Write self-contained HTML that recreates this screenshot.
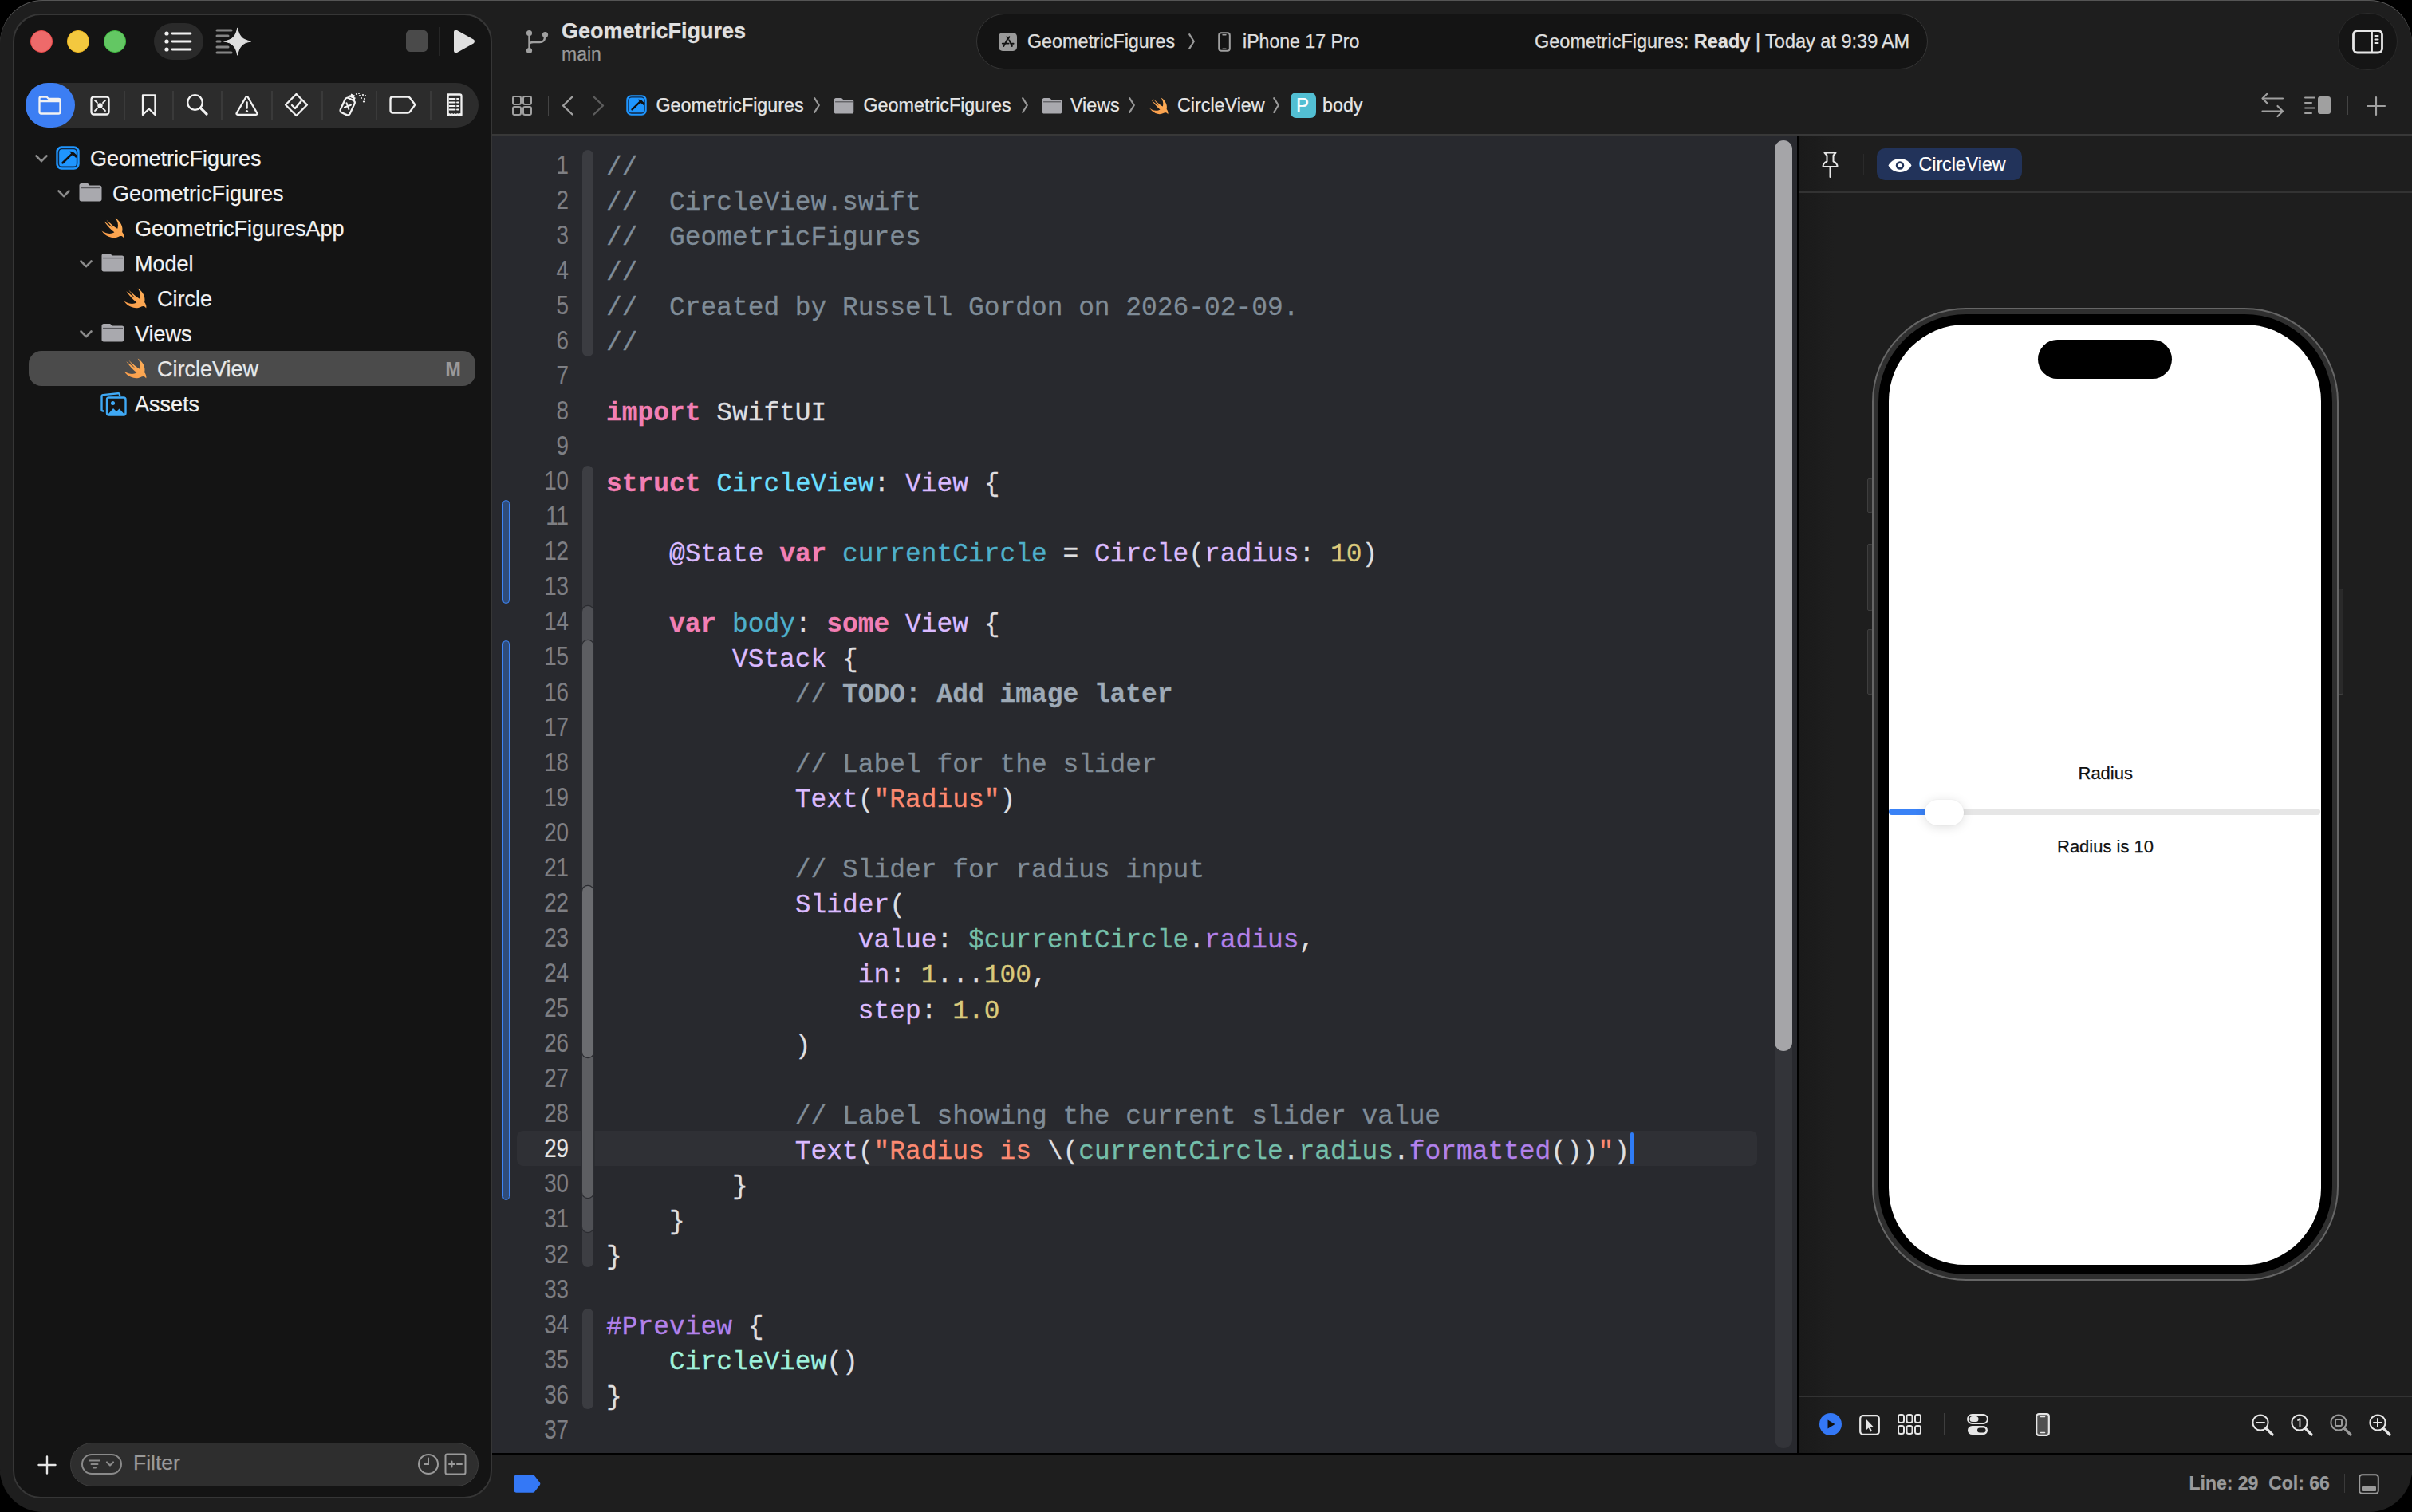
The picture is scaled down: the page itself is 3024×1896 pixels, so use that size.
<!DOCTYPE html>
<html><head><meta charset="utf-8">
<style>
*{margin:0;padding:0;box-sizing:border-box}
html,body{width:3024px;height:1896px;overflow:hidden;background:#000}
body{font-family:"Liberation Sans",sans-serif;color:#e6e6e6;position:relative}
.a{position:absolute}
svg{position:absolute;overflow:visible}
#win{left:0;top:0;width:3024px;height:1896px;border-radius:54px;background:#1e1e1e;overflow:hidden;box-shadow:inset 0 1px 0 #555}
.t{position:absolute;white-space:pre;line-height:1;-webkit-text-stroke:0.25px currentColor}
.code{font-family:"Liberation Mono",monospace;font-size:32.9px;white-space:pre;position:absolute;line-height:44.07px;left:760px;color:#dfdfe0;-webkit-text-stroke:0.3px currentColor}
.ln{position:absolute;white-space:pre;font-family:"Liberation Sans",sans-serif;font-size:33px;color:#7e7f84;text-align:right;width:100px;left:612.5px;line-height:44.07px;transform:scaleX(0.84);transform-origin:100% 0;-webkit-text-stroke:0.2px currentColor}
.code .c{color:#7f8c98}
.code .k{color:#f27fb4;font-weight:bold}
.code .td{color:#6bdfff}
.code .od{color:#4eb0cc}
.code .ty{color:#dabaff}
.code .n{color:#d9c97c}
.code .s{color:#fb8a72}
.code .pv{color:#74bfab}
.code .op{color:#b281eb}
.code .mk{color:#9eaab6;font-weight:bold}
.code .pp{color:#b281eb}
.code .pc{color:#9ef1dd}
</style></head><body>
<div id="win" class="a">
<div class="a" style="left:616.0px;top:170.0px;width:1637.0px;height:1652.0px;background:#28292e;border-radius:0px;"></div>
<div class="a" style="left:2255.0px;top:170.0px;width:769.0px;height:1652.0px;background:linear-gradient(90deg,#1a1a1a 0px,#1e1e1e 45px);border-radius:0px;"></div>
<div class="a" style="left:616.0px;top:168.0px;width:2408.0px;height:2.0px;background:#383838;border-radius:0px;"></div>
<div class="a" style="left:2253.0px;top:170.0px;width:2.0px;height:1654.0px;background:#000;border-radius:0px;"></div>
<div class="a" style="left:616.0px;top:1822.0px;width:2408.0px;height:2.0px;background:#000;border-radius:0px;"></div>
<div class="a" style="left:648.0px;top:1418.0px;width:1555.0px;height:44.0px;background:#2f3035;border-radius:8px;"></div>
<div class="a" style="left:2225.0px;top:176.0px;width:22.0px;height:1640.0px;background:#333439;border-radius:11px;"></div>
<div class="a" style="left:2225.0px;top:176.0px;width:22.0px;height:1142.0px;background:#a5a5a8;border-radius:11px;"></div>
<div class="a" style="left:630.0px;top:627.0px;width:9.0px;height:130.0px;background:#2f4c7a;border-radius:5px;border:1.6px solid #3d85f7"></div>
<div class="a" style="left:630.0px;top:803.0px;width:9.0px;height:702.0px;background:#2f4c7a;border-radius:5px;border:1.6px solid #3d85f7"></div>
<div class="a" style="left:730.0px;top:188.0px;width:14.0px;height:259.0px;background:#3b3c41;border-radius:7px;"></div>
<div class="a" style="left:730.0px;top:584.0px;width:14.0px;height:1005.0px;background:#3d3e43;border-radius:7px;"></div>
<div class="a" style="left:730.0px;top:760.0px;width:14.0px;height:785.0px;background:#4f5055;border-radius:7px;box-shadow:0 0 0 1.3px #2b2c31"></div>
<div class="a" style="left:730.0px;top:803.0px;width:14.0px;height:699.0px;background:#5d5e62;border-radius:7px;box-shadow:0 0 0 1.3px #2b2c31"></div>
<div class="a" style="left:730.0px;top:1111.0px;width:14.0px;height:215.0px;background:#6b6c70;border-radius:7px;box-shadow:0 0 0 1.3px #2b2c31"></div>
<div class="a" style="left:730.0px;top:1641.0px;width:14.0px;height:126.0px;background:#3b3c41;border-radius:7px;"></div>
<div class="ln" style="top:184.6px">1
2
3
4
5
6
7
8
9
10
11
12
13
14
15
16
17
18
19
20
21
22
23
24
25
26
27
28
<span style="color:#e6e6e6">29</span>
30
31
32
33
34
35
36
37</div>
<div class="code" style="top:189px"><span class="c">//</span>
<span class="c">//  CircleView.swift</span>
<span class="c">//  GeometricFigures</span>
<span class="c">//</span>
<span class="c">//  Created by Russell Gordon on 2026-02-09.</span>
<span class="c">//</span>

<span class="k">import</span> SwiftUI

<span class="k">struct</span> <span class="td">CircleView</span>: <span class="ty">View</span> {

    <span class="ty">@State</span> <span class="k">var</span> <span class="od">currentCircle</span> = <span class="ty">Circle</span>(<span class="ty">radius</span>: <span class="n">10</span>)

    <span class="k">var</span> <span class="od">body</span>: <span class="k">some</span> <span class="ty">View</span> {
        <span class="ty">VStack</span> {
            <span class="c">// </span><span class="mk">TODO: Add image later</span>

            <span class="c">// Label for the slider</span>
            <span class="ty">Text</span>(<span class="s">&quot;Radius&quot;</span>)

            <span class="c">// Slider for radius input</span>
            <span class="ty">Slider</span>(
                <span class="ty">value</span>: <span class="pv">$currentCircle</span>.<span class="op">radius</span>,
                <span class="ty">in</span>: <span class="n">1</span>...<span class="n">100</span>,
                <span class="ty">step</span>: <span class="n">1.0</span>
            )

            <span class="c">// Label showing the current slider value</span>
            <span class="ty">Text</span>(<span class="s">&quot;Radius is </span>\(<span class="pv">currentCircle</span>.<span class="pv">radius</span>.<span class="op">formatted</span>())<span class="s">&quot;</span>)
        }
    }
}

<span class="pp">#Preview</span> {
    <span class="pc">CircleView</span>()
}
</div>
<div class="a" style="left:2044.0px;top:1420.0px;width:4.0px;height:40.0px;background:#2f7cf6;border-radius:2px;"></div>
<div class="a" style="left:16.0px;top:17.0px;width:600.5px;height:1862.0px;background:#141414;border-radius:35px;border:2px solid #363636"></div>
<svg style="left:37.0px;top:37.0px" width="30" height="30" viewBox="0 0 30 30"><circle cx="15" cy="15" r="13.6" fill="#ee6a6a" stroke="#f04a4a" stroke-width="0.9"/></svg>
<svg style="left:83.0px;top:37.0px" width="30" height="30" viewBox="0 0 30 30"><circle cx="15" cy="15" r="13.6" fill="#f3c83f" stroke="#f5bb1f" stroke-width="0.9"/></svg>
<svg style="left:129.0px;top:37.0px" width="30" height="30" viewBox="0 0 30 30"><circle cx="15" cy="15" r="13.6" fill="#63c763" stroke="#3fbd3f" stroke-width="0.9"/></svg>
<div class="a" style="left:193.0px;top:29.0px;width:62.0px;height:46.0px;background:#2a2a2a;border-radius:23px;"></div>
<svg style="left:206.0px;top:39.0px" width="36" height="26" viewBox="0 0 36 26"><g fill="#f0f0f0"><circle cx="3" cy="3" r="2.6"/><circle cx="3" cy="13" r="2.6"/><circle cx="3" cy="23" r="2.6"/></g><g stroke="#f0f0f0" stroke-width="2.8" stroke-linecap="round"><path d="M10 3 H33"/><path d="M10 13 H33"/><path d="M10 23 H33"/></g></svg>
<svg style="left:270.0px;top:35.0px" width="46" height="35" viewBox="0 0 46 35"><g stroke="#858585" stroke-width="3" stroke-linecap="round"><path d="M2 3 H20"/><path d="M2 10 H16"/><path d="M2 17 H6"/><path d="M2 24 H16"/><path d="M2 31 H20"/></g><path fill="#dedede" stroke="#dedede" stroke-width="1.2" stroke-linejoin="round" d="M27.7 0.3 C29.3 9.8 33.5 15.6 44.6 17 C33.5 18.4 29.3 24.2 27.7 33.8 C26.1 24.2 21.9 18.4 10.8 17 C21.9 15.6 26.1 9.8 27.7 0.3Z"/></svg>
<div class="a" style="left:509.0px;top:38.0px;width:27.0px;height:27.0px;background:#4a4a4a;border-radius:5px;"></div>
<div class="a" style="left:550.5px;top:34.0px;width:1.5px;height:36.0px;background:#262626;border-radius:0px;"></div>
<svg style="left:567.0px;top:36.0px" width="30" height="31" viewBox="0 0 30 31"><path fill="#e0e0e0" d="M2 4.2C2 2 4.2 .9 6 2L26.6 13.6c1.9 1 1.9 3.7 0 4.8L6 30C4.2 31.1 2 30 2 27.8Z"/></svg>
<div class="a" style="left:32.0px;top:104.0px;width:568.0px;height:56.0px;background:#2c2c2c;border-radius:28px;"></div>
<div class="a" style="left:32.0px;top:104.0px;width:62.0px;height:56.0px;background:#3c7ef3;border-radius:28px;"></div>
<svg style="left:48.0px;top:119.0px" width="31" height="26" viewBox="0 0 31 26"><path fill="none" stroke="#f2f2f2" stroke-width="2.3" stroke-linejoin="round" d="M3.5 2.5h7l2.5 2.5h12.5c1.2 0 2 .8 2 2V21.5c0 1.2-.8 2-2 2H3.5c-1.2 0-2-.8-2-2V4.5c0-1.2.8-2 2-2z M1.5 8.2H27.5"/></svg>
<svg style="left:113.0px;top:120.0px" width="26" height="26" viewBox="0 0 26 26"><rect x="1.5" y="1.5" width="22" height="22" rx="3" fill="none" stroke="#f2f2f2" stroke-width="2.3"/><circle cx="12.5" cy="12.5" r="3.2" fill="#f2f2f2"/><g stroke="#f2f2f2" stroke-width="1.8" stroke-linecap="round"><path d="M6 6l3 3M19 6l-3 3M6 19l3-3M19 19l-3-3"/></g></svg>
<div class="a" style="left:155.2px;top:114.0px;width:1.5px;height:36.0px;background:#3a3a3a;border-radius:0px;"></div>
<div class="a" style="left:216.2px;top:114.0px;width:1.5px;height:36.0px;background:#3a3a3a;border-radius:0px;"></div>
<div class="a" style="left:277.2px;top:114.0px;width:1.5px;height:36.0px;background:#3a3a3a;border-radius:0px;"></div>
<div class="a" style="left:340.2px;top:114.0px;width:1.5px;height:36.0px;background:#3a3a3a;border-radius:0px;"></div>
<div class="a" style="left:403.2px;top:114.0px;width:1.5px;height:36.0px;background:#3a3a3a;border-radius:0px;"></div>
<div class="a" style="left:471.2px;top:114.0px;width:1.5px;height:36.0px;background:#3a3a3a;border-radius:0px;"></div>
<div class="a" style="left:539.2px;top:114.0px;width:1.5px;height:36.0px;background:#3a3a3a;border-radius:0px;"></div>
<svg style="left:177.0px;top:117.0px" width="20" height="30" viewBox="0 0 20 30"><path fill="none" stroke="#f2f2f2" stroke-width="2.3" stroke-linejoin="round" d="M2 2.5h15.5V27L9.75 19.5 2 27z"/></svg>
<svg style="left:233.0px;top:117.0px" width="29" height="29" viewBox="0 0 29 29"><circle cx="11.5" cy="11.5" r="9.3" fill="none" stroke="#f2f2f2" stroke-width="2.3"/><path d="M18.5 18.5L26 26" stroke="#f2f2f2" stroke-width="3.2" stroke-linecap="round"/></svg>
<svg style="left:295.0px;top:119.0px" width="29" height="26" viewBox="0 0 29 26"><path fill="none" stroke="#f2f2f2" stroke-width="2.3" stroke-linejoin="round" d="M14.5 2.2c.6 0 1 .3 1.3.8l11.5 19.8c.6 1-.1 2-1.2 2H2.9c-1.1 0-1.8-1-1.2-2L13.2 3c.3-.5.7-.8 1.3-.8z"/><path d="M14.5 9.5v7" stroke="#f2f2f2" stroke-width="2.6" stroke-linecap="round"/><circle cx="14.5" cy="20.5" r="1.6" fill="#f2f2f2"/></svg>
<svg style="left:356.0px;top:116.0px" width="31" height="31" viewBox="0 0 31 31"><path fill="none" stroke="#f2f2f2" stroke-width="2.3" stroke-linejoin="round" d="M15.5 2L29 15.5 15.5 29 2 15.5z"/><path d="M10 16l4 4 7.5-9" fill="none" stroke="#f2f2f2" stroke-width="2.4" stroke-linecap="round" stroke-linejoin="round"/></svg>
<svg style="left:425.0px;top:115.0px" width="37" height="32" viewBox="0 0 37 32"><g transform="rotate(25 12 17)"><rect x="5" y="9" width="13" height="20" rx="3" fill="none" stroke="#f2f2f2" stroke-width="2.3"/><path d="M8 9V6h7v3M10 6V3.5h3V6" fill="none" stroke="#f2f2f2" stroke-width="2.2"/><path d="M8.5 15.5l6 6M14.5 15.5l-6 6" stroke="#f2f2f2" stroke-width="2" stroke-linecap="round"/></g><g fill="#f2f2f2"><circle cx="22" cy="3" r="1.1"/><circle cx="26" cy="5" r="1.1"/><circle cx="30" cy="4" r="1.1"/><circle cx="33" cy="5" r="1.1"/><circle cx="28" cy="8" r="1.1"/><circle cx="32" cy="9" r="1.1"/><circle cx="31" cy="12.5" r="1.1"/><circle cx="25" cy="2" r="1"/></g></svg>
<svg style="left:488.0px;top:120.0px" width="34" height="23" viewBox="0 0 34 23"><path fill="none" stroke="#f2f2f2" stroke-width="2.3" stroke-linejoin="round" d="M4.5 1.5h19c1 0 1.8.4 2.4 1.2l5.6 7.6c.5.7.5 1.7 0 2.4l-5.6 7.6c-.6.8-1.4 1.2-2.4 1.2h-19c-1.7 0-3-1.3-3-3V4.5c0-1.7 1.3-3 3-3z"/></svg>
<svg style="left:558.0px;top:117.0px" width="23" height="30" viewBox="0 0 23 30"><path fill="none" stroke="#f2f2f2" stroke-width="2.3" stroke-linejoin="round" d="M3.5 1.5h15c1.1 0 2 .9 2 2V27.5l-1.6-1.2-1.7 1.2-1.7-1.2-1.7 1.2-1.7-1.2-1.7 1.2-1.7-1.2-1.7 1.2-1.7-1.2-1.7 1.2V3.5c0-1.1.9-2 2-2z"/><g stroke="#f2f2f2" stroke-width="1.9" stroke-linecap="round"><path d="M5.5 7 h7 M15 7 h2"/><path d="M5.5 11.5 h7 M15 11.5 h2"/><path d="M5.5 16 h7 M15 16 h2"/><path d="M5.5 20.5 h7 M15 20.5 h2"/></g></svg>
<div class="a" style="left:36.0px;top:440.0px;width:560.0px;height:44.0px;background:#4b4b4b;border-radius:16px;"></div>
<svg style="left:44.0px;top:193.5px" width="16" height="10" viewBox="0 0 16 10"><path d="M1.5 1.5L8 8.2 14.5 1.5" fill="none" stroke="#8a8a8a" stroke-width="2.6" stroke-linecap="round" stroke-linejoin="round"/></svg>
<svg style="left:70.0px;top:182.5px" width="30" height="30" viewBox="0 0 30 30"><rect x="0.3" y="0.3" width="29.4" height="29.4" rx="7" fill="#1f96ff"/><rect x="3.4" y="3.4" width="23.2" height="23.2" rx="4.6" fill="none" stroke="#0e2746" stroke-width="1.5"/><path d="M4.2 26.2H25.8" stroke="#163a63" stroke-width="1.2"/><path d="M8.6 21.2L19.6 10.6" stroke="#111" stroke-width="2.7" stroke-linecap="round"/><path fill="#111" d="M17.4 6.7C20.4 6.4 22.9 8 24.6 10.1L27.4 12.6 25.2 14.9 22.6 12.6 20.8 11.8 19.5 10.3Z"/></svg>
<div class="t" style="left:113.0px;top:185.6px;font-size:27.00px;color:#f2f2f2;font-weight:normal;">GeometricFigures</div>
<svg style="left:72.0px;top:237.5px" width="16" height="10" viewBox="0 0 16 10"><path d="M1.5 1.5L8 8.2 14.5 1.5" fill="none" stroke="#8a8a8a" stroke-width="2.6" stroke-linecap="round" stroke-linejoin="round"/></svg>
<svg style="left:99.0px;top:229.0px" width="29" height="24" viewBox="0 0 28 24"><path fill="#a9a9ae" d="M2.5 1h7.2c.9 0 1.4.3 2 1l1.2 1.4H25.5c1.4 0 2.5 1.1 2.5 2.5V21c0 1.4-1.1 2.5-2.5 2.5h-23C1.1 23.5 0 22.4 0 21V3.5C0 2.1 1.1 1 2.5 1z"/><path d="M1.5 6.6H26.5" stroke="#58585c" stroke-width="1.4"/></svg>
<div class="t" style="left:141.0px;top:229.6px;font-size:27.00px;color:#f2f2f2;font-weight:normal;">GeometricFigures</div>
<svg style="left:125.5px;top:273.0px" width="30" height="26" viewBox="1.4 3.3 19.5 16.6"><defs><linearGradient id="sg1528" x1="0" y1="1" x2="1" y2="0"><stop offset="0" stop-color="#f99a48"/><stop offset="1" stop-color="#ffb25a"/></linearGradient></defs><path fill="url(#sg1528)" d="M13.543 3.41c4.114 2.47 6.545 7.162 5.549 11.131-.024.093-.05.181-.076.272l.002.001c2.062 2.538 1.5 5.258 1.236 4.745-1.072-2.086-3.066-1.568-4.088-1.043a6.803 6.803 0 0 1-.281.158l-.02.012-.002.002c-2.115 1.123-4.957 1.205-7.812-.022a12.568 12.568 0 0 1-5.64-4.838c.649.48 1.350.902 2.097 1.252 3.019 1.414 6.051 1.311 8.197-.002C9.651 12.730 7.101 9.670 5.146 7.191a14.180 14.180 0 0 1-1.005-1.384c2.340 2.142 6.038 4.830 7.365 5.576C8.690 8.408 6.208 4.743 6.324 4.860c4.436 4.470 8.528 6.996 8.528 6.996.154.085.270.154.360.213.085-.215.160-.437.223-.668.708-2.588-.090-5.548-1.892-7.992z"/></svg>
<div class="t" style="left:169.0px;top:273.6px;font-size:27.00px;color:#f2f2f2;font-weight:normal;">GeometricFiguresApp</div>
<svg style="left:100.0px;top:325.5px" width="16" height="10" viewBox="0 0 16 10"><path d="M1.5 1.5L8 8.2 14.5 1.5" fill="none" stroke="#8a8a8a" stroke-width="2.6" stroke-linecap="round" stroke-linejoin="round"/></svg>
<svg style="left:127.0px;top:317.0px" width="29" height="24" viewBox="0 0 28 24"><path fill="#a9a9ae" d="M2.5 1h7.2c.9 0 1.4.3 2 1l1.2 1.4H25.5c1.4 0 2.5 1.1 2.5 2.5V21c0 1.4-1.1 2.5-2.5 2.5h-23C1.1 23.5 0 22.4 0 21V3.5C0 2.1 1.1 1 2.5 1z"/><path d="M1.5 6.6H26.5" stroke="#58585c" stroke-width="1.4"/></svg>
<div class="t" style="left:169.0px;top:317.6px;font-size:27.00px;color:#f2f2f2;font-weight:normal;">Model</div>
<svg style="left:153.5px;top:361.0px" width="30" height="26" viewBox="1.4 3.3 19.5 16.6"><defs><linearGradient id="sg1896" x1="0" y1="1" x2="1" y2="0"><stop offset="0" stop-color="#f99a48"/><stop offset="1" stop-color="#ffb25a"/></linearGradient></defs><path fill="url(#sg1896)" d="M13.543 3.41c4.114 2.47 6.545 7.162 5.549 11.131-.024.093-.05.181-.076.272l.002.001c2.062 2.538 1.5 5.258 1.236 4.745-1.072-2.086-3.066-1.568-4.088-1.043a6.803 6.803 0 0 1-.281.158l-.02.012-.002.002c-2.115 1.123-4.957 1.205-7.812-.022a12.568 12.568 0 0 1-5.64-4.838c.649.48 1.350.902 2.097 1.252 3.019 1.414 6.051 1.311 8.197-.002C9.651 12.730 7.101 9.670 5.146 7.191a14.180 14.180 0 0 1-1.005-1.384c2.340 2.142 6.038 4.830 7.365 5.576C8.690 8.408 6.208 4.743 6.324 4.860c4.436 4.470 8.528 6.996 8.528 6.996.154.085.270.154.360.213.085-.215.160-.437.223-.668.708-2.588-.090-5.548-1.892-7.992z"/></svg>
<div class="t" style="left:197.0px;top:361.6px;font-size:27.00px;color:#f2f2f2;font-weight:normal;">Circle</div>
<svg style="left:100.0px;top:413.5px" width="16" height="10" viewBox="0 0 16 10"><path d="M1.5 1.5L8 8.2 14.5 1.5" fill="none" stroke="#8a8a8a" stroke-width="2.6" stroke-linecap="round" stroke-linejoin="round"/></svg>
<svg style="left:127.0px;top:405.0px" width="29" height="24" viewBox="0 0 28 24"><path fill="#a9a9ae" d="M2.5 1h7.2c.9 0 1.4.3 2 1l1.2 1.4H25.5c1.4 0 2.5 1.1 2.5 2.5V21c0 1.4-1.1 2.5-2.5 2.5h-23C1.1 23.5 0 22.4 0 21V3.5C0 2.1 1.1 1 2.5 1z"/><path d="M1.5 6.6H26.5" stroke="#58585c" stroke-width="1.4"/></svg>
<div class="t" style="left:169.0px;top:405.6px;font-size:27.00px;color:#f2f2f2;font-weight:normal;">Views</div>
<svg style="left:153.5px;top:449.0px" width="30" height="26" viewBox="1.4 3.3 19.5 16.6"><defs><linearGradient id="sg1984" x1="0" y1="1" x2="1" y2="0"><stop offset="0" stop-color="#f99a48"/><stop offset="1" stop-color="#ffb25a"/></linearGradient></defs><path fill="url(#sg1984)" d="M13.543 3.41c4.114 2.47 6.545 7.162 5.549 11.131-.024.093-.05.181-.076.272l.002.001c2.062 2.538 1.5 5.258 1.236 4.745-1.072-2.086-3.066-1.568-4.088-1.043a6.803 6.803 0 0 1-.281.158l-.02.012-.002.002c-2.115 1.123-4.957 1.205-7.812-.022a12.568 12.568 0 0 1-5.64-4.838c.649.48 1.350.902 2.097 1.252 3.019 1.414 6.051 1.311 8.197-.002C9.651 12.730 7.101 9.670 5.146 7.191a14.180 14.180 0 0 1-1.005-1.384c2.340 2.142 6.038 4.830 7.365 5.576C8.690 8.408 6.208 4.743 6.324 4.860c4.436 4.470 8.528 6.996 8.528 6.996.154.085.270.154.360.213.085-.215.160-.437.223-.668.708-2.588-.090-5.548-1.892-7.992z"/></svg>
<div class="t" style="left:197.0px;top:449.6px;font-size:27.00px;color:#e8e8e8;font-weight:normal;">CircleView</div>
<svg style="left:126.0px;top:490.5px" width="33" height="32" viewBox="0 0 33 32"><g fill="none" stroke="#3fa9f5" stroke-width="2.4" stroke-linejoin="round"><path d="M5 24.5H3.2c-1 0-1.7-.8-1.7-1.8V6c0-1 .7-1.8 1.7-1.9L22 2.2c1-.1 1.9.6 2 1.6l.2 2.2"/><rect x="8" y="7.5" width="23.5" height="22" rx="2.5"/></g><path fill="#3fa9f5" d="M9.5 28.5l6.5-7.5 4 4 3.5-3.5 6.5 7v1.5h-20.5z"/><circle cx="15.5" cy="14.5" r="2.5" fill="#3fa9f5"/></svg>
<div class="t" style="left:169.0px;top:493.6px;font-size:27.00px;color:#f2f2f2;font-weight:normal;">Assets</div>
<div class="t" style="left:558.5px;top:451.5px;font-size:23.00px;color:#9a9a9a;font-weight:bold;">M</div>
<svg style="left:47.0px;top:1825.0px" width="24" height="24" viewBox="0 0 24 24"><path d="M12 1.5V22.5M1.5 12H22.5" stroke="#e6e6e6" stroke-width="2.4" stroke-linecap="round"/></svg>
<div class="a" style="left:88.0px;top:1808.5px;width:512.0px;height:55.0px;background:#2e2e2e;border-radius:28px;border:1.5px solid #3d3d3d"></div>
<svg style="left:102.0px;top:1823.0px" width="51" height="26" viewBox="0 0 51 26"><rect x="1" y="1" width="49" height="24" rx="12" fill="none" stroke="#8a8a8a" stroke-width="2"/><g stroke="#8a8a8a" stroke-width="2" stroke-linecap="round"><path d="M10 8.5h13M12.5 13h8M15 17.5h3"/></g><path d="M32 10.5l4 4 4-4" fill="none" stroke="#8a8a8a" stroke-width="2.2" stroke-linecap="round" stroke-linejoin="round"/></svg>
<div class="t" style="left:167.0px;top:1821.1px;font-size:26.50px;color:#9a9a9a;font-weight:normal;">Filter</div>
<svg style="left:523.0px;top:1822.0px" width="28" height="28" viewBox="0 0 28 28"><circle cx="14" cy="14" r="12" fill="none" stroke="#9a9a9a" stroke-width="2"/><path d="M14 6.5V14H9" fill="none" stroke="#9a9a9a" stroke-width="2" stroke-linecap="round"/></svg>
<svg style="left:557.0px;top:1822.0px" width="28" height="28" viewBox="0 0 28 28"><rect x="1.5" y="1.5" width="25" height="25" rx="2" fill="none" stroke="#9a9a9a" stroke-width="2"/><path d="M6 14h7M9.5 10.5v7M16 14h6" stroke="#9a9a9a" stroke-width="2" stroke-linecap="round"/></svg>
<svg style="left:659.0px;top:37.0px" width="30" height="32" viewBox="0 0 30 32"><g fill="#a0a0a0"><circle cx="4.5" cy="4.5" r="3.6"/><circle cx="24.5" cy="6.5" r="3.6"/><circle cx="4.5" cy="26.5" r="3.6"/></g><path d="M4.5 4.5V26.5M4.5 19.5c0-2.5 1.8-3.5 5-3.5h8c4 0 6.5-2 6.5-6.5V6.5" fill="none" stroke="#a0a0a0" stroke-width="2.4"/></svg>
<div class="t" style="left:704.0px;top:25.6px;font-size:27.00px;color:#e0e0e0;font-weight:bold;">GeometricFigures</div>
<div class="t" style="left:704.0px;top:56.5px;font-size:23.00px;color:#9a9a9a;font-weight:normal;">main</div>
<div class="a" style="left:1224.0px;top:17.0px;width:1193.0px;height:70.0px;background:#141414;border-radius:35px;border:1.5px solid #363636"></div>
<svg style="left:1252.0px;top:40.7px" width="23" height="23" viewBox="0 0 23 23"><rect x="0" y="0" width="23" height="23" rx="5" fill="#9a9a9a"/><g stroke="#111" stroke-width="1.9" stroke-linecap="round"><path d="M6.3 17L12 6.6M10.3 5.2l1.9 2.6M13.4 5.3l-1.8 2.9M13.3 9.5L16.9 17M4.8 13.6H12.6M16 13.7h2.6"/></g></svg>
<div class="t" style="left:1288.0px;top:41.3px;font-size:23.30px;color:#e0e0e0;font-weight:normal;">GeometricFigures</div>
<svg style="left:1490.0px;top:42.0px" width="8" height="20" viewBox="0 0 8 20"><path d="M1.2 1.2L6.8 10 1.2 18.8" fill="none" stroke="#9a9a9a" stroke-width="2.2" stroke-linecap="round" stroke-linejoin="round"/></svg>
<svg style="left:1526.5px;top:40.0px" width="16" height="25" viewBox="0 0 16 25"><rect x="1.2" y="1.2" width="13.6" height="22.6" rx="3" fill="none" stroke="#a0a0a0" stroke-width="2"/><path d="M6 3.8h4M6 21.2h4" stroke="#a0a0a0" stroke-width="1.4" stroke-linecap="round"/></svg>
<div class="t" style="left:1558.0px;top:41.4px;font-size:23.10px;color:#e0e0e0;font-weight:normal;">iPhone 17 Pro</div>
<div class="t" style="left:1924.0px;top:41.1px;font-size:23.50px;color:#e0e0e0;font-weight:normal;">GeometricFigures: <b>Ready</b> | Today at 9:39 AM</div>
<div class="a" style="left:2930.5px;top:16.0px;width:75.0px;height:72.0px;background:#151515;border-radius:36px;border:1.5px solid #2a2a2a"></div>
<svg style="left:2949.0px;top:36.5px" width="40" height="31" viewBox="0 0 40 31"><rect x="1.5" y="1.5" width="36" height="27.5" rx="5" fill="none" stroke="#e6e6e6" stroke-width="2.8"/><path d="M24.5 1.5V29" stroke="#e6e6e6" stroke-width="2.8"/><path d="M28.5 8h4M28.5 12.5h4M28.5 17h4" stroke="#e6e6e6" stroke-width="2" stroke-linecap="round"/></svg>
<svg style="left:641.5px;top:120.0px" width="25" height="25" viewBox="0 0 25 25"><rect x="1" y="1" width="10" height="10" rx="2.2" fill="none" stroke="#a0a0a0" stroke-width="2"/><rect x="1" y="14" width="10" height="10" rx="2.2" fill="none" stroke="#a0a0a0" stroke-width="2"/><rect x="14" y="1" width="10" height="10" rx="2.2" fill="none" stroke="#a0a0a0" stroke-width="2"/><rect x="14" y="14" width="10" height="10" rx="2.2" fill="none" stroke="#a0a0a0" stroke-width="2"/></svg>
<div class="a" style="left:686.5px;top:120.0px;width:1.5px;height:25.0px;background:#444;border-radius:0px;"></div>
<svg style="left:703.0px;top:120.0px" width="18" height="25" viewBox="0 0 18 25"><path d="M14.5 1.5L3 12.5 14.5 23.5" fill="none" stroke="#a0a0a0" stroke-width="2.4" stroke-linecap="round" stroke-linejoin="round"/></svg>
<svg style="left:741.0px;top:120.0px" width="18" height="25" viewBox="0 0 18 25"><path d="M3.5 1.5L15 12.5 3.5 23.5" fill="none" stroke="#5c5c5c" stroke-width="2.4" stroke-linecap="round" stroke-linejoin="round"/></svg>
<svg style="left:784.5px;top:119.0px" width="26" height="26" viewBox="0 0 30 30"><rect x="0.3" y="0.3" width="29.4" height="29.4" rx="7" fill="#1f96ff"/><rect x="3.4" y="3.4" width="23.2" height="23.2" rx="4.6" fill="none" stroke="#0e2746" stroke-width="1.5"/><path d="M4.2 26.2H25.8" stroke="#163a63" stroke-width="1.2"/><path d="M8.6 21.2L19.6 10.6" stroke="#111" stroke-width="2.7" stroke-linecap="round"/><path fill="#111" d="M17.4 6.7C20.4 6.4 22.9 8 24.6 10.1L27.4 12.6 25.2 14.9 22.6 12.6 20.8 11.8 19.5 10.3Z"/></svg>
<div class="t" style="left:822.5px;top:121.3px;font-size:23.30px;color:#e6e6e6;font-weight:normal;">GeometricFigures</div>
<svg style="left:1019.5px;top:122.0px" width="8" height="20" viewBox="0 0 8 20"><path d="M1.2 1.2L6.8 10 1.2 18.8" fill="none" stroke="#9a9a9a" stroke-width="2.2" stroke-linecap="round" stroke-linejoin="round"/></svg>
<svg style="left:1045.0px;top:121.5px" width="26" height="21" viewBox="0 0 28 24"><path fill="#a9a9ae" d="M2.5 1h7.2c.9 0 1.4.3 2 1l1.2 1.4H25.5c1.4 0 2.5 1.1 2.5 2.5V21c0 1.4-1.1 2.5-2.5 2.5h-23C1.1 23.5 0 22.4 0 21V3.5C0 2.1 1.1 1 2.5 1z"/><path d="M1.5 6.6H26.5" stroke="#58585c" stroke-width="1.4"/></svg>
<div class="t" style="left:1082.5px;top:121.3px;font-size:23.30px;color:#e6e6e6;font-weight:normal;">GeometricFigures</div>
<svg style="left:1280.5px;top:122.0px" width="8" height="20" viewBox="0 0 8 20"><path d="M1.2 1.2L6.8 10 1.2 18.8" fill="none" stroke="#9a9a9a" stroke-width="2.2" stroke-linecap="round" stroke-linejoin="round"/></svg>
<svg style="left:1305.5px;top:121.5px" width="26" height="21" viewBox="0 0 28 24"><path fill="#a9a9ae" d="M2.5 1h7.2c.9 0 1.4.3 2 1l1.2 1.4H25.5c1.4 0 2.5 1.1 2.5 2.5V21c0 1.4-1.1 2.5-2.5 2.5h-23C1.1 23.5 0 22.4 0 21V3.5C0 2.1 1.1 1 2.5 1z"/><path d="M1.5 6.6H26.5" stroke="#58585c" stroke-width="1.4"/></svg>
<div class="t" style="left:1342.0px;top:121.3px;font-size:23.30px;color:#e6e6e6;font-weight:normal;">Views</div>
<svg style="left:1414.5px;top:122.0px" width="8" height="20" viewBox="0 0 8 20"><path d="M1.2 1.2L6.8 10 1.2 18.8" fill="none" stroke="#9a9a9a" stroke-width="2.2" stroke-linecap="round" stroke-linejoin="round"/></svg>
<svg style="left:1439.5px;top:121.5px" width="25" height="22" viewBox="1.4 3.3 19.5 16.6"><defs><linearGradient id="sg14516" x1="0" y1="1" x2="1" y2="0"><stop offset="0" stop-color="#f99a48"/><stop offset="1" stop-color="#ffb25a"/></linearGradient></defs><path fill="url(#sg14516)" d="M13.543 3.41c4.114 2.47 6.545 7.162 5.549 11.131-.024.093-.05.181-.076.272l.002.001c2.062 2.538 1.5 5.258 1.236 4.745-1.072-2.086-3.066-1.568-4.088-1.043a6.803 6.803 0 0 1-.281.158l-.02.012-.002.002c-2.115 1.123-4.957 1.205-7.812-.022a12.568 12.568 0 0 1-5.64-4.838c.649.48 1.350.902 2.097 1.252 3.019 1.414 6.051 1.311 8.197-.002C9.651 12.730 7.101 9.670 5.146 7.191a14.180 14.180 0 0 1-1.005-1.384c2.340 2.142 6.038 4.830 7.365 5.576C8.690 8.408 6.208 4.743 6.324 4.860c4.436 4.470 8.528 6.996 8.528 6.996.154.085.270.154.360.213.085-.215.160-.437.223-.668.708-2.588-.090-5.548-1.892-7.992z"/></svg>
<div class="t" style="left:1476.0px;top:121.3px;font-size:23.30px;color:#e6e6e6;font-weight:normal;">CircleView</div>
<svg style="left:1596.0px;top:122.0px" width="8" height="20" viewBox="0 0 8 20"><path d="M1.2 1.2L6.8 10 1.2 18.8" fill="none" stroke="#9a9a9a" stroke-width="2.2" stroke-linecap="round" stroke-linejoin="round"/></svg>
<div class="a" style="left:1618.0px;top:116.0px;width:32.0px;height:32.0px;background:#52bfd3;border-radius:7px;"></div>
<div class="t" style="left:1625.0px;top:120.2px;font-size:24.00px;color:#ffffff;font-weight:normal;">P</div>
<div class="t" style="left:1658.0px;top:121.3px;font-size:23.30px;color:#e6e6e6;font-weight:normal;">body</div>
<svg style="left:2835.0px;top:114.5px" width="29" height="34" viewBox="0 0 29 34"><g fill="none" stroke="#a0a0a0" stroke-width="2.2" stroke-linecap="round" stroke-linejoin="round"><path d="M1.5 8.5H27M1.5 8.5l6.5-6.5M1.5 8.5l6.5 6.5"/><path d="M1.5 24.5H27M27 24.5l-6.5-6.5M27 24.5l-6.5 6.5"/></g></svg>
<svg style="left:2889.0px;top:121.0px" width="33" height="22" viewBox="0 0 33 22"><g stroke="#a0a0a0" stroke-width="2" stroke-linecap="round"><path d="M1 1.5h12M1 8h8M1 14.5h12M1 21h8"/></g><rect x="17" y="0" width="16" height="22" rx="3" fill="#a0a0a0"/></svg>
<div class="a" style="left:2942.5px;top:120.0px;width:1.5px;height:24.0px;background:#444;border-radius:0px;"></div>
<svg style="left:2967.0px;top:121.0px" width="24" height="24" viewBox="0 0 24 24"><path d="M12 1V23M1 12H23" stroke="#a0a0a0" stroke-width="2.2" stroke-linecap="round"/></svg>
<svg style="left:2284.0px;top:189.5px" width="21" height="33" viewBox="0 0 21 33"><path fill="none" stroke="#e6e6e6" stroke-width="2" stroke-linejoin="round" d="M3.5 1.5h14l-3 3.5v7.5c3.5 1.5 5 4 5 6.5H1.5c0-2.5 1.5-5 5-6.5V5z"/><path d="M10.5 19v13" stroke="#e6e6e6" stroke-width="2" stroke-linecap="round"/></svg>
<div class="a" style="left:2335.5px;top:193.0px;width:1.5px;height:26.0px;background:#2a2a2a;border-radius:0px;"></div>
<div class="a" style="left:2353.0px;top:186.0px;width:182.0px;height:40.0px;background:#22335a;border-radius:10px;"></div>
<svg style="left:2366.5px;top:197.5px" width="30" height="19" viewBox="0 0 30 19"><path fill="#ffffff" d="M15 1C8 1 3 5 .5 9.5 3 14 8 18 15 18s12-4 14.5-8.5C27 5 22 1 15 1z"/><circle cx="15" cy="9.5" r="5.2" fill="#22335a"/><circle cx="15" cy="9.5" r="2.4" fill="#ffffff"/></svg>
<div class="t" style="left:2405.5px;top:195.4px;font-size:23.20px;color:#ffffff;font-weight:normal;">CircleView</div>
<div class="a" style="left:2255.0px;top:240.0px;width:769.0px;height:2.0px;background:#333333;border-radius:0px;"></div>
<div class="a" style="left:2341.0px;top:600.0px;width:7.0px;height:43.0px;background:#2a2a2a;border-radius:2px;border:1px solid #3e3e3e"></div>
<div class="a" style="left:2341.0px;top:682.0px;width:7.0px;height:84.0px;background:#2a2a2a;border-radius:2px;border:1px solid #3e3e3e"></div>
<div class="a" style="left:2341.0px;top:789.0px;width:7.0px;height:82.0px;background:#2a2a2a;border-radius:2px;border:1px solid #3e3e3e"></div>
<div class="a" style="left:2931.0px;top:738.0px;width:7.0px;height:133.0px;background:#2a2a2a;border-radius:2px;border:1px solid #3e3e3e"></div>
<div class="a" style="left:2347.0px;top:386.0px;width:585.0px;height:1220.0px;background:#2f2f2f;border-radius:118px;border:2px solid #666666"></div>
<div class="a" style="left:2355.0px;top:394.0px;width:569.0px;height:1204.0px;background:#000;border-radius:110px;"></div>
<div class="a" style="left:2368.0px;top:407.0px;width:542.0px;height:1179.0px;background:#ffffff;border-radius:96px;"></div>
<div class="a" style="left:2554.5px;top:426.0px;width:168.5px;height:49.0px;background:#000;border-radius:24.5px;"></div>
<div class="t" style="left:2605.5px;top:958.9px;font-size:22.00px;color:#111111;font-weight:normal;">Radius</div>
<div class="a" style="left:2368.0px;top:1014.0px;width:541.0px;height:8.0px;background:#e6e6e6;border-radius:4px;"></div>
<div class="a" style="left:2368.0px;top:1014.0px;width:60.0px;height:8.0px;background:#3a82f6;border-radius:4px;"></div>
<div class="a" style="left:2413.0px;top:1003.0px;width:49.0px;height:32.0px;background:#ffffff;border-radius:16px;box-shadow:0 2px 14px rgba(0,0,0,.13),0 0 2px rgba(0,0,0,.06)"></div>
<div class="t" style="left:2579.0px;top:1050.9px;font-size:22.00px;color:#111111;font-weight:normal;">Radius is 10</div>
<div class="a" style="left:2255.0px;top:1750.0px;width:769.0px;height:2.0px;background:#333333;border-radius:0px;"></div>
<svg style="left:2281.0px;top:1772.0px" width="28" height="28" viewBox="0 0 28 28"><circle cx="14" cy="14" r="14" fill="#3478f6"/><path d="M10.5 8.5v11l9-5.5z" fill="#111"/></svg>
<svg style="left:2330.5px;top:1773.5px" width="26" height="26" viewBox="0 0 26 26"><rect x="1.2" y="1.2" width="23.6" height="23.6" rx="3.5" fill="none" stroke="#e6e6e6" stroke-width="2.2"/><path fill="#e6e6e6" d="M8.5 5.5v14l3.2-3 2.4 5 2-1-2.4-4.8h4.5z"/></svg>
<svg style="left:2378.5px;top:1773.0px" width="31" height="26" viewBox="0 0 31 26"><rect x="1" y="1" width="7" height="10" rx="2.5" fill="none" stroke="#e6e6e6" stroke-width="2"/><rect x="1" y="15" width="7" height="10" rx="2.5" fill="none" stroke="#e6e6e6" stroke-width="2"/><rect x="11.5" y="1" width="7" height="10" rx="2.5" fill="none" stroke="#e6e6e6" stroke-width="2"/><rect x="11.5" y="15" width="7" height="10" rx="2.5" fill="none" stroke="#e6e6e6" stroke-width="2"/><rect x="22" y="1" width="7" height="10" rx="2.5" fill="none" stroke="#e6e6e6" stroke-width="2"/><rect x="22" y="15" width="7" height="10" rx="2.5" fill="none" stroke="#e6e6e6" stroke-width="2"/></svg>
<div class="a" style="left:2436.5px;top:1772.0px;width:1.5px;height:28.0px;background:#3e3e3e;border-radius:0px;"></div>
<svg style="left:2465.5px;top:1773.0px" width="27" height="27" viewBox="0 0 27 27"><rect x="1" y="1" width="25" height="11" rx="5.5" fill="none" stroke="#e6e6e6" stroke-width="2"/><rect x="3.5" y="3" width="11" height="7" rx="3.5" fill="#e6e6e6"/><rect x="1" y="15" width="25" height="11" rx="5.5" fill="#e6e6e6"/><rect x="13" y="17.5" width="10.5" height="6" rx="3" fill="#1e1e1e"/></svg>
<div class="a" style="left:2521.5px;top:1772.0px;width:1.5px;height:28.0px;background:#3e3e3e;border-radius:0px;"></div>
<svg style="left:2551.5px;top:1772.0px" width="18" height="29" viewBox="0 0 18 29"><rect x="1.2" y="1.2" width="15.6" height="26.6" rx="3" fill="#505050" stroke="#e6e6e6" stroke-width="2.2"/><path d="M6.5 4.5h5M6.5 24.5h5" stroke="#e6e6e6" stroke-width="1.6" stroke-linecap="round"/></svg>
<svg style="left:2822.5px;top:1772.5px" width="28" height="28" viewBox="0 0 28 28"><circle cx="11" cy="11" r="9.6" fill="none" stroke="#e6e6e6" stroke-width="2"/><path d="M18 18l8 8" stroke="#e6e6e6" stroke-width="3.2" stroke-linecap="round"/><path d="M6 11h10" stroke="#e6e6e6" stroke-width="2" stroke-linecap="round"/></svg>
<svg style="left:2871.5px;top:1772.5px" width="28" height="28" viewBox="0 0 28 28"><circle cx="11" cy="11" r="9.6" fill="none" stroke="#e6e6e6" stroke-width="2"/><path d="M18 18l8 8" stroke="#e6e6e6" stroke-width="3.2" stroke-linecap="round"/><path d="M9 8l2.5-2V16" fill="none" stroke="#e6e6e6" stroke-width="1.8" stroke-linecap="round" stroke-linejoin="round"/></svg>
<svg style="left:2920.5px;top:1772.5px" width="28" height="28" viewBox="0 0 28 28"><circle cx="11" cy="11" r="9.6" fill="none" stroke="#9a9a9a" stroke-width="2"/><path d="M18 18l8 8" stroke="#9a9a9a" stroke-width="3.2" stroke-linecap="round"/><rect x="7" y="7" width="8" height="8" rx="1.5" fill="none" stroke="#9a9a9a" stroke-width="2"/></svg>
<svg style="left:2969.5px;top:1772.5px" width="28" height="28" viewBox="0 0 28 28"><circle cx="11" cy="11" r="9.6" fill="none" stroke="#e6e6e6" stroke-width="2"/><path d="M18 18l8 8" stroke="#e6e6e6" stroke-width="3.2" stroke-linecap="round"/><path d="M6 11h10M11 6v10" stroke="#e6e6e6" stroke-width="2" stroke-linecap="round"/></svg>
<svg style="left:643.5px;top:1849.0px" width="36" height="24" viewBox="0 0 36 24"><path fill="#3478f6" d="M3.5 0.5h20.5c1 0 1.8.4 2.4 1.2l6.5 8.6c.6.8.6 1.9 0 2.7l-6.5 8.6c-.6.8-1.4 1.2-2.4 1.2H3.5C1.8 22.8.5 21.5.5 19.8V3.5C.5 1.8 1.8.5 3.5.5z"/></svg>
<div class="t" style="left:2744.5px;top:1848.5px;font-size:23.00px;color:#9a9a9a;font-weight:bold;">Line: 29  Col: 66</div>
<div class="a" style="left:2938.5px;top:1848.0px;width:1.5px;height:24.0px;background:#3a3a3a;border-radius:0px;"></div>
<svg style="left:2956.5px;top:1847.5px" width="26" height="26" viewBox="0 0 26 26"><rect x="1.2" y="1.2" width="23.6" height="23.6" rx="3.5" fill="none" stroke="#9a9a9a" stroke-width="2"/><rect x="4" y="16" width="18" height="6" rx="1" fill="#9a9a9a"/></svg>
</div>
</body></html>
